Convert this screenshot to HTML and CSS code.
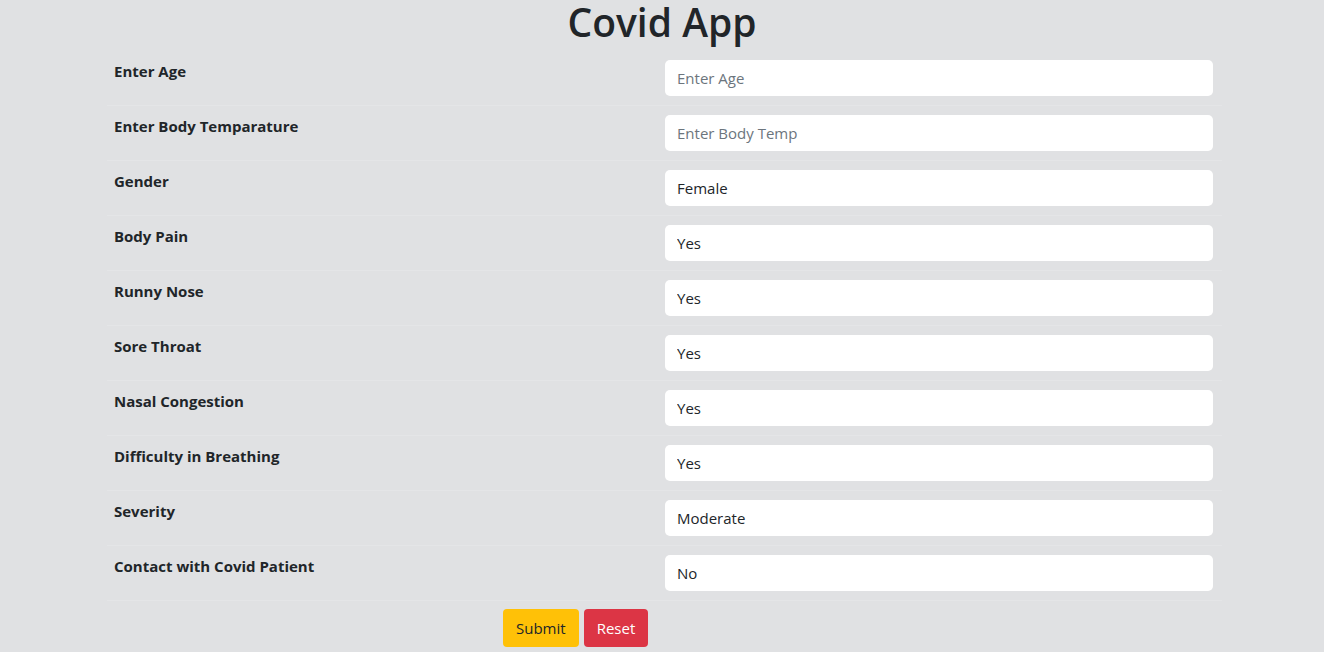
FILE: index.html
```html
<!DOCTYPE html>
<html lang="en">
<head>
<meta charset="utf-8">
<title>Covid App</title>
<link rel="stylesheet" href="styles.css">
</head>
<body>
<h1 class="title">Covid App</h1>
<form class="form">
  <div class="row">
    <label class="label" for="age">Enter Age</label>
    <input class="field" id="age" type="text" placeholder="Enter Age">
  </div>
  <div class="row">
    <label class="label" for="temp">Enter Body Temparature</label>
    <input class="field" id="temp" type="text" placeholder="Enter Body Temp">
  </div>
  <div class="row">
    <label class="label" for="gender">Gender</label>
    <select class="field" id="gender"><option>Female</option><option>Male</option></select>
  </div>
  <div class="row">
    <label class="label" for="pain">Body Pain</label>
    <select class="field" id="pain"><option>Yes</option><option>No</option></select>
  </div>
  <div class="row">
    <label class="label" for="nose">Runny Nose</label>
    <select class="field" id="nose"><option>Yes</option><option>No</option></select>
  </div>
  <div class="row">
    <label class="label" for="throat">Sore Throat</label>
    <select class="field" id="throat"><option>Yes</option><option>No</option></select>
  </div>
  <div class="row">
    <label class="label" for="nasal">Nasal Congestion</label>
    <select class="field" id="nasal"><option>Yes</option><option>No</option></select>
  </div>
  <div class="row">
    <label class="label" for="breath">Difficulty in Breathing</label>
    <select class="field" id="breath"><option>Yes</option><option>No</option></select>
  </div>
  <div class="row">
    <label class="label" for="sev">Severity</label>
    <select class="field" id="sev"><option>Moderate</option><option>Mild</option><option>Severe</option></select>
  </div>
  <div class="row">
    <label class="label" for="contact">Contact with Covid Patient</label>
    <select class="field" id="contact"><option>No</option><option>Yes</option></select>
  </div>
  <div class="actions">
    <button class="btn btn-submit" type="submit">Submit</button>
    <button class="btn btn-reset" type="reset">Reset</button>
  </div>
</form>
</body>
</html>
```

FILE: styles.css
```css
html, body {
  margin: 0;
  padding: 0;
}
body {
  background: #e0e1e3;
  color: #212529;
  font-family: "Open Sans", "Noto Sans", sans-serif;
  font-size: 16px;
  line-height: 1.5;
}
.title {
  margin: 0;
  padding-bottom: 7px;
  font-size: 39px;
  font-weight: 600;
  line-height: 44px;
  text-align: center;
}
.form {
  width: 1115px;
  margin-left: calc(50% - 555px);
}
.row {
  display: grid;
  grid-template-columns: 1fr 548px;
  padding: 9px 9px 9px 7px;
  border-bottom: 1px solid #e4e5e7;
}
.label {
  font-weight: 700;
  font-size: 15px;
  line-height: 22px;
}
.field {
  appearance: none;
  -webkit-appearance: none;
  box-sizing: border-box;
  height: 36px;
  width: 548px;
  border: 0;
  border-radius: 5px;
  background: #fff;
  padding: 0 12px;
  font-family: inherit;
  font-size: 15px;
  color: #212529;
  outline: none;
}
.field::placeholder {
  color: #6c757d;
}
.actions {
  display: flex;
  gap: 5px;
  padding: 8px 0 0 396px;
}
.btn {
  height: 38px;
  border: 0;
  border-radius: 4px;
  padding: 0 13px;
  font-family: inherit;
  font-size: 15px;
}
.btn-submit {
  background: #ffc107;
  color: #212529;
}
.btn-reset {
  background: #dc3545;
  color: #fff;
}
```
